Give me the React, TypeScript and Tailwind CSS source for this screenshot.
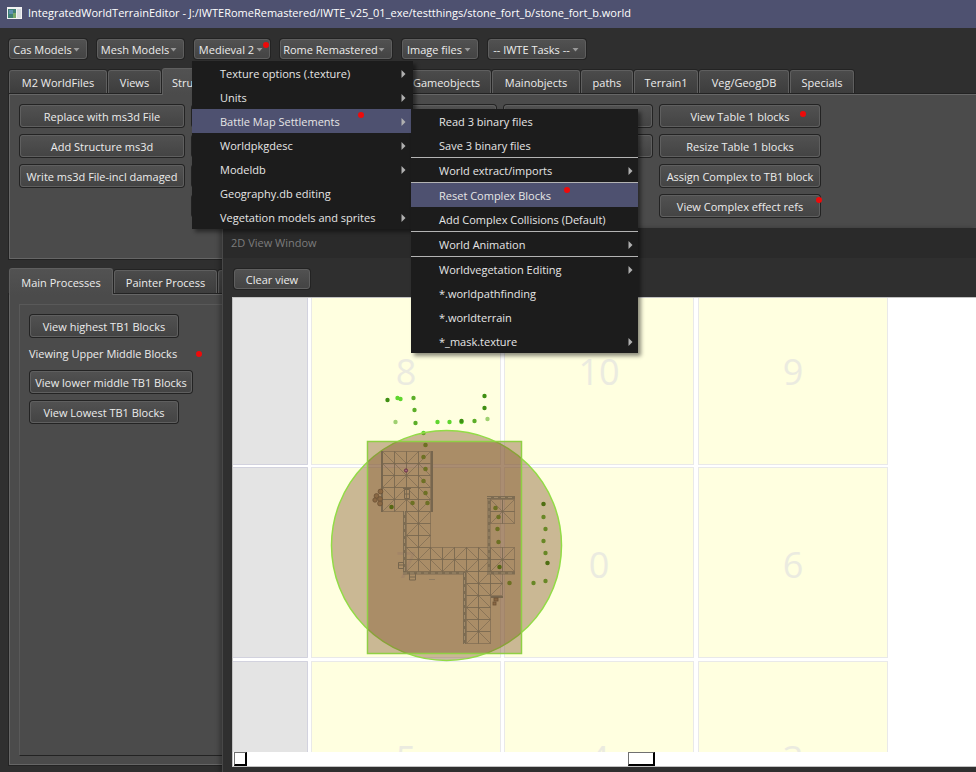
import type { ReactNode } from "react";

const BEVEL =
  "rounded-[3px] border border-[#5f5f5f] bg-linear-to-b from-[#515151] to-[#444444] shadow-[0_0_0_1px_#232323]";

function RedDot({ className }: { className: string }) {
  return <span aria-hidden className={`absolute size-[6px] rounded-full bg-[#ee0a0a] ${className}`} />;
}

function PushButton({ children, label, className = "", dot }: { children?: ReactNode; label?: string; className?: string; dot?: string }) {
  return (
    <div className={`relative flex h-6 p-px ${className}`}>
      <button type="button" aria-label={label} className={`flex-1 whitespace-nowrap pt-px text-center ${BEVEL}`}>
        {children}
      </button>
      {dot && <RedDot className={dot} />}
    </div>
  );
}

function MenuButton({ children, width, open, menu }: { children: ReactNode; width: string; open?: boolean; menu?: ReactNode }) {
  return (
    <div className={`relative flex h-[22px] p-px ${width}`}>
      <button
        type="button"
        aria-haspopup="menu"
        aria-expanded={!!open}
        className={`flex flex-1 items-center justify-between whitespace-nowrap pt-px pr-[6px] pl-[2px] ${BEVEL}`}
      >
        <span className="flex-1 text-center">{children}</span>
        <svg width="7" height="4" viewBox="0 0 7 4" className="shrink-0" aria-hidden>
          <path d="M0.5 0h6L3.5 3.6z" fill="#999999" />
        </svg>
      </button>
      {menu}
    </div>
  );
}

type Entry = { text?: string; sub?: boolean; dot?: string; active?: boolean; children?: ReactNode };

function Menu({ entries, className, label }: { entries: Entry[]; className: string; label: string }) {
  return (
    <ul role="menu" aria-label={label} className={`absolute bg-[#1c1c1c] text-[#e6e6e6] shadow-[3px_3px_4px_rgba(0,0,0,0.45)] ${className}`}>
      {entries.map((e, i) =>
        e.text === undefined ? (
          <li key={i} role="separator" className="h-px bg-[#b4b4b4]" />
        ) : (
          <li key={i} role="none" className="relative">
            <button
              type="button"
              role="menuitem"
              className={`flex h-6 w-full items-center justify-between whitespace-nowrap pt-px pr-[5px] pl-7 text-left ${e.active ? "bg-[#4e5170]" : ""}`}
            >
              {e.text}
              {e.sub && (
                <svg width="5" height="8" viewBox="0 0 5 8" aria-hidden>
                  <path d="M0.5 0L4.5 4L0.5 8z" fill="#b0b0b0" />
                </svg>
              )}
            </button>
            {e.dot && <RedDot className={e.dot} />}
            {e.children}
          </li>
        ),
      )}
    </ul>
  );
}

const SETTLEMENT_MENU: Entry[] = [
  { text: "Read 3 binary files" },
  { text: "Save 3 binary files" },
  {},
  { text: "World extract/imports", sub: true },
  {},
  { text: "Reset Complex Blocks", active: true, dot: "left-[153px] top-[4px]" },
  { text: "Add Complex Collisions (Default)" },
  {},
  { text: "World Animation", sub: true },
  {},
  { text: "Worldvegetation Editing", sub: true },
  { text: "*.worldpathfinding" },
  { text: "*.worldterrain" },
  { text: "*_mask.texture", sub: true },
];

const MEDIEVAL_MENU: Entry[] = [
  { text: "Texture options (.texture)", sub: true },
  { text: "Units", sub: true },
  {
    text: "Battle Map Settlements",
    sub: true,
    active: true,
    dot: "left-[166px] top-[3px]",
    children: <Menu label="Battle Map Settlements" entries={SETTLEMENT_MENU} className="top-0 left-full w-[227px]" />,
  },
  { text: "Worldpkgdesc", sub: true },
  { text: "Modeldb", sub: true },
  { text: "Geography.db editing" },
  { text: "Vegetation models and sprites", sub: true },
];

function Tab({ children, label, width, selected, align = "text-center" }: { children?: ReactNode; label?: string; width: string; selected?: boolean; align?: string }) {
  return (
    <button
      type="button"
      role="tab"
      aria-label={label}
      aria-selected={!!selected}
      className={`shrink-0 whitespace-nowrap rounded-t-[3px] border border-b-0 border-[#5f5f5f] pt-px ${width} ${align} ${
        selected
          ? "relative -mb-px h-[27px] bg-linear-to-b from-[#525252] to-[#4b4b4b]"
          : "h-[23px] mb-px bg-linear-to-b from-[#4b4b4b] to-[#3d3d3d] shadow-[0_0_0_1px_#232323]"
      }`}
    >
      {children}
    </button>
  );
}

/* Cell edges of the block map, in canvas units. */
const COLS = [311, 504, 698];
const ROWS = [274, 467, 661];
const NUMBERS = [
  ["8", "10", "9"],
  ["7", "0", "6"],
  ["5", "4", "3"],
];

/* Each mesh: origin plus one string per row; the character is the diagonal in that 12-unit cell. */
const MESHES: { x: number; y: number; rows: string[] }[] = [
  { x: 382, y: 451, rows: ["\\\\//", "\\\\/\\", "//\\\\", "\\/\\\\", "//\\/"] },
  { x: 406, y: 511, rows: ["\\/", "/\\", "\\/"] },
  { x: 406, y: 547, rows: ["\\/\\//\\\\", "/\\\\/\\//"] },
  { x: 466, y: 571, rows: ["\\/", "\\\\", "/\\", "\\\\", "\\/", "/\\"] },
  { x: 490, y: 499, rows: ["\\/", "/\\"] },
  { x: 490, y: 547, rows: ["\\/", "/\\"] },
  { x: 490, y: 571, rows: ["\\", "/"] },
];

const WALLS = ["M404.5 511V573", "M403 573H466", "M464.5 573V644", "M489 497V574", "M487 497.5H515", "M487 573H515"];

const BRIGHT = [[397, 398], [400, 399], [423, 433], [437, 422], [449, 422], [461, 422]];
const DARK = [[461, 421], [484, 396], [484, 408], [391, 507], [543, 504], [547, 563], [499, 567], [387, 400]];
const MID = [
  [413, 398], [414, 410], [415, 423], [474, 421], [425, 445], [423, 457], [425, 469], [423, 481], [425, 493], [427, 503],
  [412, 503], [543, 517], [545, 529], [543, 541], [545, 553], [545, 581], [533, 583], [509, 583], [495, 508], [498, 517],
  [497, 529], [498, 542],
];
const PALE = [[395, 422], [487, 419]];

function Dots({ points, fill, r }: { points: number[][]; fill: string; r: number }) {
  return (
    <g fill={fill}>
      {points.map(([x, y]) => (
        <circle key={`${x}-${y}`} cx={x + 0.5} cy={y} r={r} />
      ))}
    </g>
  );
}

function MapCanvas() {
  return (
    <svg width="100%" height="100%" className="absolute inset-0" role="img" aria-label="Block map">
      <g transform="translate(-233 -298)">
        {ROWS.map((y, r) => (
          <g key={y}>
            <rect x={225} y={y} width={83} height={191} fill="#e4e4e4" />
            <path d={`M225 ${y + 0.5}H307.5V${y + 190.5}H225`} fill="none" stroke="#d2d2de" />
            {COLS.map((x, c) => (
              <g key={x}>
                <rect x={x + 0.5} y={y + 0.5} width={189} height={190} fill="#ffffe0" stroke="#e9e9e9" />
                <text x={x + 95} y={y + 111} textAnchor="middle" fontSize="36" fill="#ebebe0">
                  {NUMBERS[r][c]}
                </text>
              </g>
            ))}
          </g>
        ))}

        <Dots points={BRIGHT} fill="#5fd62e" r={2.2} />
        <Dots points={DARK} fill="#3f8f12" r={2.2} />
        <Dots points={MID} fill="#5cae28" r={2.2} />
        <Dots points={PALE} fill="#9fd070" r={2.2} />

        <circle cx="446.5" cy="545.5" r="115" fill="#7a4e24" fillOpacity="0.4" stroke="#92dc46" strokeWidth="1.5" />
        <rect x="367.5" y="441.5" width="154" height="212" fill="#7a4e24" fillOpacity="0.4" stroke="#8fd044" strokeWidth="1.5" />

        <g stroke="#77664e" strokeWidth="1" fill="none">
          {MESHES.map((m) => (
            <g key={`${m.x}-${m.y}`}>
              {m.rows.map((row, r) =>
                row.split("").map((d, c) => {
                  const x = m.x + c * 12 + 0.5;
                  const y = m.y + r * 12 + 0.5;
                  const diagonal = d === "/" ? `M${x} ${y + 12}l12 -12` : `M${x} ${y}l12 12`;
                  return <path key={`${r}-${c}`} d={`M${x} ${y}h12v12h-12z${diagonal}`} strokeOpacity="0.6" />;
                }),
              )}
            </g>
          ))}
          {WALLS.map((d) => (
            <g key={d}>
              <path d={d} stroke="#75664f" strokeWidth="3" strokeOpacity="0.85" />
              <path d={d} stroke="#a08a6a" strokeWidth="1" strokeDasharray="4 3" />
            </g>
          ))}
          <path d="M382 451V512M432 451V512M491 597H503" strokeWidth="2" />
          <path d="M404.5 489.5h5v9h-5zM403 488.5h8M404 494h6M398.5 562.5h5v6h-5zM398 565h6M409.5 573v7h6v-7M409 577h6" />
          <path d="M429 579.5h6" stroke="#8f7b60" />
        </g>
        <g fill="#8a6844" stroke="#6b5236" strokeWidth="0.8">
          <circle cx="380.5" cy="491.5" r="2.4" />
          <circle cx="376.5" cy="496" r="2.4" />
          <circle cx="380" cy="499" r="2.4" />
          <circle cx="375" cy="500" r="2.2" />
          <circle cx="380" cy="503.5" r="2.4" />
          <rect x="494" y="598" width="4" height="3" />
          <rect x="493" y="602" width="3" height="3" />
        </g>
        <g fillOpacity="0.65">
          <Dots points={MID.filter(([x, y]) => x > 367 && x < 521 && y > 442)} fill="#6c7224" r={2} />
          <Dots points={DARK.filter(([x, y]) => y > 442 && x > 367)} fill="#4b6a10" r={2} />
        </g>
        <circle cx="406" cy="470.5" r="1.6" fill="#a06a7a" stroke="#6a3048" />
      </g>
    </svg>
  );
}

const THUMB =
  "appearance-none bg-white [&::-webkit-slider-thumb]:box-border [&::-webkit-slider-thumb]:h-[14px] [&::-webkit-slider-thumb]:appearance-none [&::-webkit-slider-thumb]:rounded-none [&::-webkit-slider-thumb]:border [&::-webkit-slider-thumb]:border-r-2 [&::-webkit-slider-thumb]:border-b-2 [&::-webkit-slider-thumb]:border-t-[#707070] [&::-webkit-slider-thumb]:border-r-black [&::-webkit-slider-thumb]:border-b-black [&::-webkit-slider-thumb]:border-l-[#707070] [&::-webkit-slider-thumb]:bg-white";

function ViewWindow() {
  return (
    <section
      aria-label="2D View Window"
      className="absolute top-[228px] right-0 bottom-0 left-[222px] z-10 flex flex-col border-l border-[#484848] bg-[#2f2f2f] shadow-[-3px_0_4px_rgba(0,0,0,0.25)]"
    >
      <h2 className="h-[30px] bg-[#2a2a2a] pl-2 leading-[30px] text-[#7c7c7c]">2D View Window</h2>
      <div className="flex pt-[10px] pb-[7px] pl-[10px]">
        <div className="flex h-[22px] w-[78px] p-px">
          <button type="button" className={`flex-1 pt-px ${BEVEL}`}>
            Clear view
          </button>
        </div>
      </div>
      <div className="mb-[5px] ml-[9px] flex flex-1 flex-col border border-r-0 border-[#c2c2c2] bg-white">
        <div className="relative flex-1 overflow-hidden">
          <MapCanvas />
        </div>
        <div className="flex h-[14px] pl-px">
          <input type="range" aria-label="Zoom" defaultValue={0} className={`w-[394px] shrink-0 ${THUMB} [&::-webkit-slider-thumb]:w-[13px]`} />
          <input type="range" aria-label="Horizontal position" defaultValue={0} className={`min-w-0 flex-1 ${THUMB} [&::-webkit-slider-thumb]:w-[27px]`} />
        </div>
      </div>
    </section>
  );
}

const PANEL = "ml-[9px] border-y border-l border-[#666666] bg-[#4b4b4b] shadow-[0_0_0_1px_#232323]";

export default function App() {
  return (
    <div className="relative flex min-h-screen flex-col overflow-hidden bg-[#2f2f2f] font-['Open_Sans','Noto_Sans',sans-serif] text-[11px] leading-[18px] text-[#ececec]">
      <header className="flex h-7 items-center gap-[6px] bg-[#4e5170] pb-[2px] pl-[7px] text-white">
        <svg width="15" height="12" viewBox="0 0 15 12" aria-hidden>
          <rect width="15" height="12" fill="#f2f2f2" />
          <rect x="1" y="2" width="8" height="9" fill="#3f7f74" />
          <rect x="2" y="3" width="4" height="4" fill="#5f8fb0" />
          <rect x="6" y="6" width="3" height="5" fill="#77a86a" />
          <rect x="10" y="2" width="4" height="9" fill="#d8dce0" />
        </svg>
        <h1>IntegratedWorldTerrainEditor - J:/IWTERomeRemastered/IWTE_v25_01_exe/testthings/stone_fort_b/stone_fort_b.world</h1>
      </header>

      <nav className="relative z-20 flex gap-2 pt-[10px] pb-2 pl-[8px]">
        <MenuButton width="w-[80px]">Cas Models</MenuButton>
        <MenuButton width="w-[89px]">Mesh Models</MenuButton>
        <MenuButton
          width="w-[78px]"
          open
          menu={
            <>
              <RedDot className="top-[4px] right-[2px]" />
              <Menu label="Medieval 2" entries={MEDIEVAL_MENU} className="top-[23px] -left-px w-[221px] pr-[2px]" />
            </>
          }
        >
          Medieval 2
        </MenuButton>
        <MenuButton width="w-[114px]">Rome Remastered</MenuButton>
        <MenuButton width="w-[78px]">Image files</MenuButton>
        <MenuButton width="w-[100px]">-- IWTE Tasks --</MenuButton>
      </nav>

      <div role="tablist" aria-label="World data" className="flex h-[26px] items-end gap-px pl-[9px]">
        <Tab width="w-[98px]">M2 WorldFiles</Tab>
        <Tab width="w-[53px]">Views</Tab>
        <Tab width="w-[90px]" selected align="pl-[9px] text-left">
          Structures
        </Tab>
        <Tab width="w-[148px]" label="Complexes" />
        <Tab width="w-[89px]">Gameobjects</Tab>
        <Tab width="w-[88px]">Mainobjects</Tab>
        <Tab width="w-[52px]">paths</Tab>
        <Tab width="w-[64px]">Terrain1</Tab>
        <Tab width="w-[90px]">Veg/GeogDB</Tab>
        <Tab width="w-[64px]">Specials</Tab>
      </div>
      <section className={`flex gap-[6px] pt-[9px] pb-[40px] pl-[9px] ${PANEL}`}>
        <div className="flex w-[166px] flex-col gap-[6px]">
          <PushButton>Replace with ms3d File</PushButton>
          <PushButton>Add Structure ms3d</PushButton>
          <PushButton>Write ms3d File-incl damaged</PushButton>
        </div>
        <div className="flex w-[150px] flex-col gap-[6px]">
          <PushButton label="Load structure" />
          <PushButton label="Save structure" />
          <PushButton label="Copy structure" />
          <PushButton label="Delete structure" />
        </div>
        <div className="flex w-[150px] flex-col gap-[6px]">
          <PushButton label="List structures" />
          <PushButton label="View structure" />
        </div>
        <div className="flex w-[150px] flex-col gap-[6px]">
          <PushButton label="View complex" />
          <PushButton label="Resize complex" />
        </div>
        <div className="flex w-[162px] flex-col gap-[6px]">
          <PushButton dot="top-[7px] right-[15px]">View Table 1 blocks</PushButton>
          <PushButton>Resize Table 1 blocks</PushButton>
          <PushButton>Assign Complex to TB1 block</PushButton>
          <PushButton dot="top-[3px] -right-px">View Complex effect refs</PushButton>
        </div>
      </section>

      <div role="tablist" aria-label="Processes" className="mt-[9px] flex h-[26px] items-end gap-px pl-[9px]">
        <Tab width="w-[104px]" selected>
          Main Processes
        </Tab>
        <Tab width="w-[103px]">Painter Process</Tab>
        <Tab width="w-[100px]" label="Block processes" />
      </div>
      <section className={`mb-[7px] flex flex-1 flex-col pt-[9px] pb-2 pl-[9px] ${PANEL}`}>
        <div className="flex flex-1 flex-col gap-[6px] border-t border-b border-l border-[#595959] border-b-[#232323] pt-[9px] pl-[9px]">
          <PushButton className="w-[150px]">View highest TB1 Blocks</PushButton>
          <p className="relative h-5 w-[173px] pt-px">
            Viewing Upper Middle Blocks
            <RedDot className="top-[7px] right-0" />
          </p>
          <PushButton className="w-[164px]">View lower middle TB1 Blocks</PushButton>
          <PushButton className="w-[150px]">View Lowest TB1 Blocks</PushButton>
        </div>
      </section>

      <ViewWindow />
    </div>
  );
}
